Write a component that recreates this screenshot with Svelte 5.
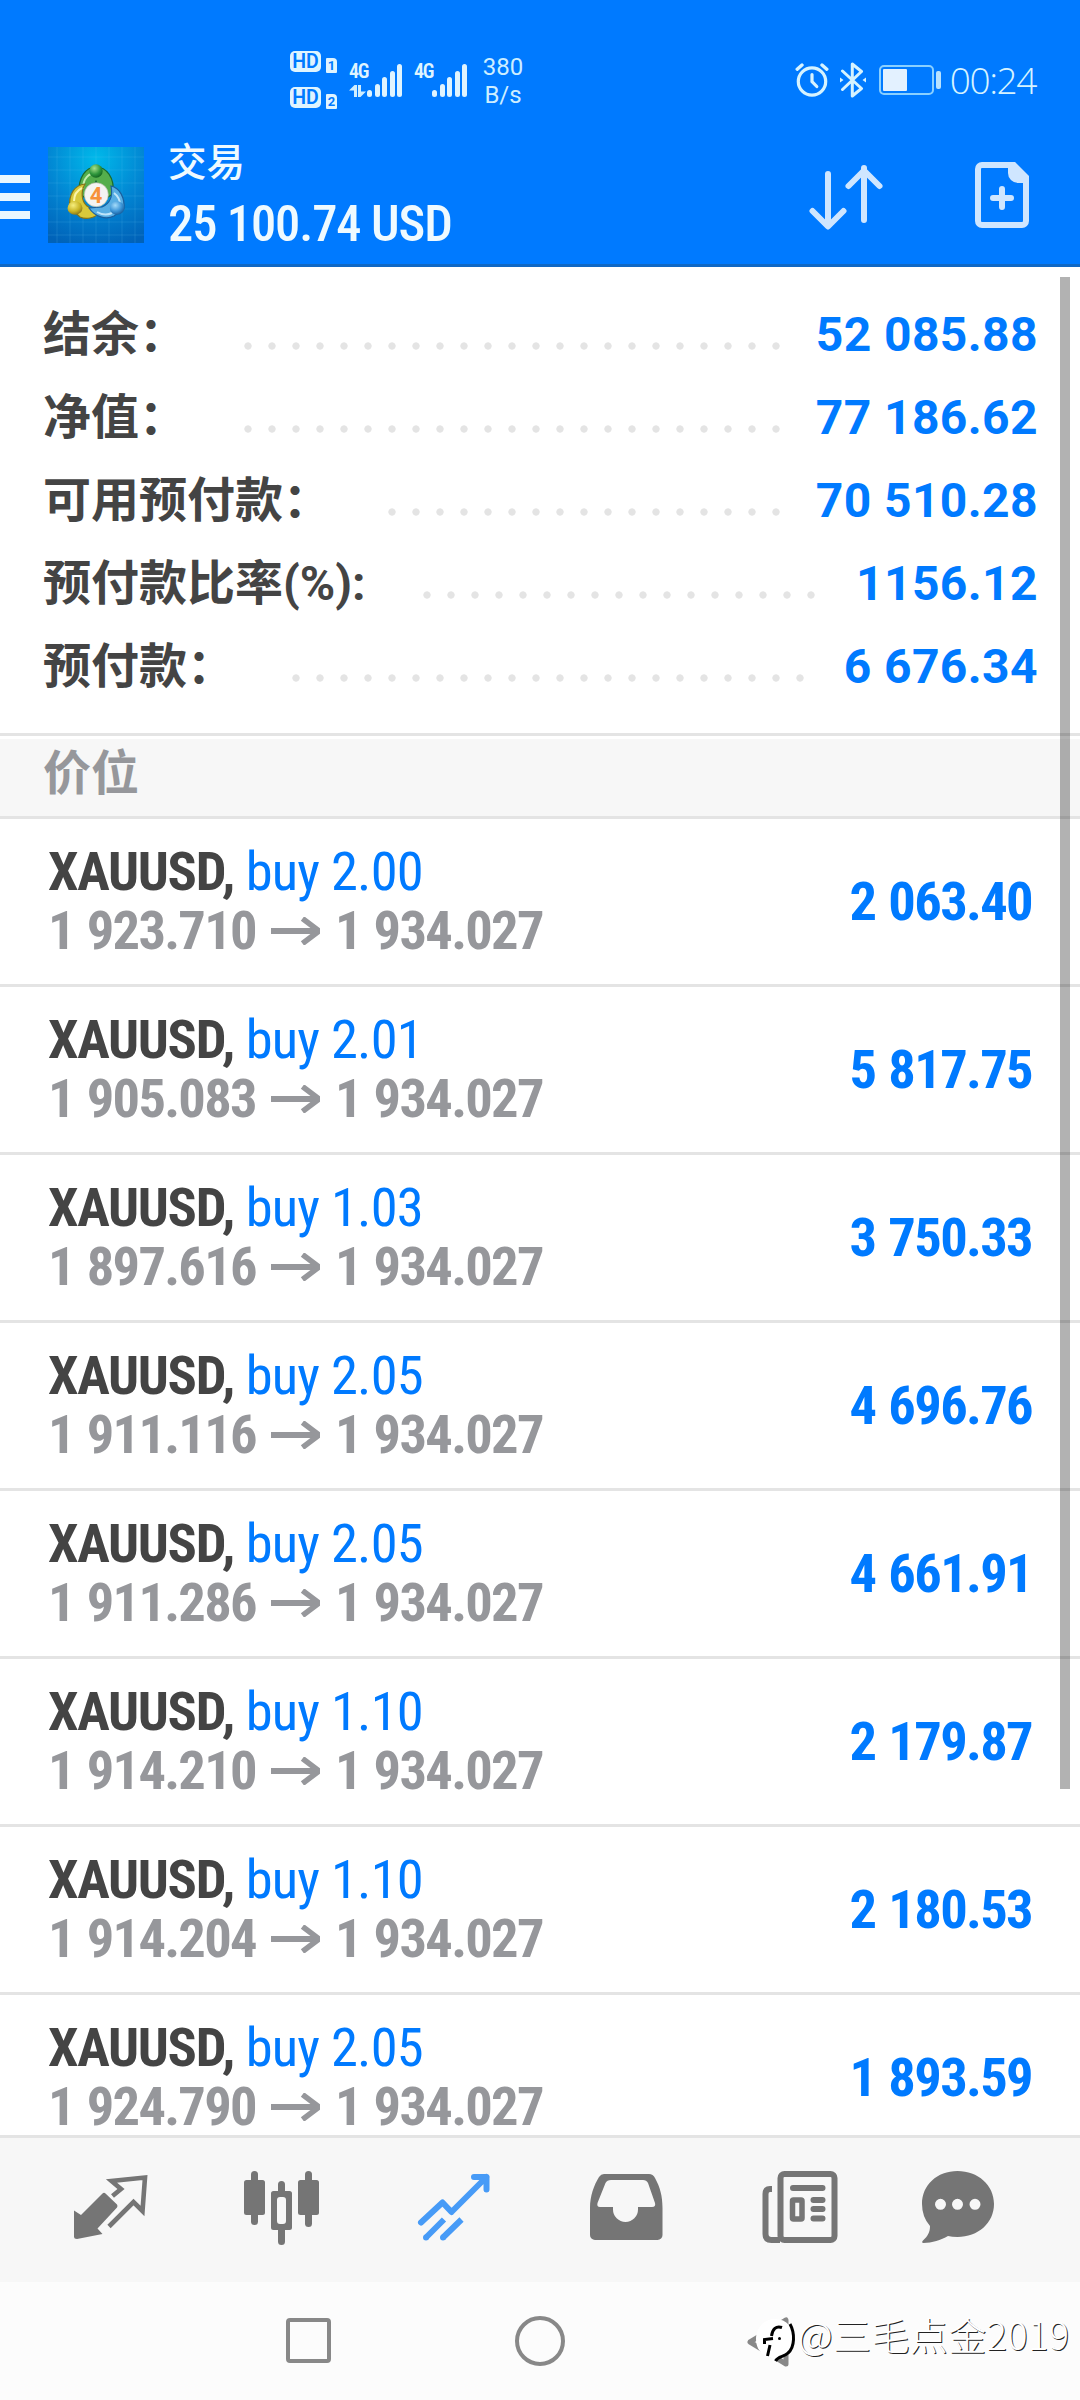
<script lang="ts">
  type SummaryRow = { label: string; dots: number; value: string };
  type Position = { symbol: string; volume: string; open: string; current: string; profit: string };

  const summary: SummaryRow[] = [
    { label: '结余：', dots: 23, value: '52 085.88' },
    { label: '净值：', dots: 23, value: '77 186.62' },
    { label: '可用预付款：', dots: 17, value: '70 510.28' },
    { label: '预付款比率(%):', dots: 17, value: '1156.12' },
    { label: '预付款：', dots: 22, value: '6 676.34' },
  ];

  const positions: Position[] = [
    { symbol: 'XAUUSD', volume: '2.00', open: '1 923.710', current: '1 934.027', profit: '2 063.40' },
    { symbol: 'XAUUSD', volume: '2.01', open: '1 905.083', current: '1 934.027', profit: '5 817.75' },
    { symbol: 'XAUUSD', volume: '1.03', open: '1 897.616', current: '1 934.027', profit: '3 750.33' },
    { symbol: 'XAUUSD', volume: '2.05', open: '1 911.116', current: '1 934.027', profit: '4 696.76' },
    { symbol: 'XAUUSD', volume: '2.05', open: '1 911.286', current: '1 934.027', profit: '4 661.91' },
    { symbol: 'XAUUSD', volume: '1.10', open: '1 914.210', current: '1 934.027', profit: '2 179.87' },
    { symbol: 'XAUUSD', volume: '1.10', open: '1 914.204', current: '1 934.027', profit: '2 180.53' },
    { symbol: 'XAUUSD', volume: '2.05', open: '1 924.790', current: '1 934.027', profit: '1 893.59' },
  ];

  const bars = [7, 13, 20, 26.5, 33];
</script>

{#snippet signal(data: boolean)}
  <div class="signal">
    <div class="net">
      <span class="net-type">4G</span>
      {#if data}
        <svg width="17" height="12" viewBox="0 0 17 12" fill="#cfeeff"><path d="M0 5.5L5.5 0H8v12H5V5.5zM9 0h3v6.5h5L11.5 12H9z"/></svg>
      {/if}
    </div>
    <div class="bars">
      {#each bars as h}
        <i style="height: {h}px"></i>
      {/each}
    </div>
  </div>
{/snippet}

<div class="screen">
  <header>
    <div class="status">
      <div class="hd">
        {#each [1, 2] as sim}
          <div class="hd-row">
            <span class="hd-badge">HD</span>
            <span class="sim">{sim}</span>
          </div>
        {/each}
      </div>
      {@render signal(true)}
      {@render signal(false)}
      <div class="speed"><span>380</span><span>B/s</span></div>
      <div class="spacer"></div>
      <svg class="alarm" width="34" height="36" viewBox="0 0 34 36" fill="none" stroke="#d6f3ff" stroke-linecap="round">
        <circle cx="17" cy="19.5" r="13.7" stroke-width="3.2"/>
        <path d="M17 12.5V19.5L21.8 24.5" stroke-width="3.2"/>
        <path d="M2.2 7.2L7 3M31.8 7.2L27 3" stroke-width="3.4"/>
      </svg>
      <svg class="bt" width="28" height="36" viewBox="0 0 28 36" fill="none" stroke="#d6f3ff" stroke-width="3" stroke-linejoin="round" stroke-linecap="round">
        <path d="M3.5 9L22.5 26.5 13.3 34V2L22.5 9.5 3.5 27.5"/>
        <path d="M1 15.5v5l3.5-2.5zM27 15.5v5l-3.5-2.5z" fill="#d6f3ff" stroke="none"/>
      </svg>
      <div class="battery"><div class="shell"><i></i></div><b></b></div>
      <span class="clock">00:24</span>
    </div>

    <div class="toolbar">
      <div class="menu"><i></i><i></i><i></i></div>
      <svg class="logo" width="96" height="96" viewBox="0 0 96 96">
        <defs>
          <radialGradient id="bg" cx="50%" cy="12%" r="95%">
            <stop offset="0" stop-color="#00b9ea"/><stop offset=".55" stop-color="#0284d2"/><stop offset="1" stop-color="#0062b8"/>
          </radialGradient>
          <radialGradient id="green" cx="38%" cy="30%" r="75%"><stop offset="0" stop-color="#a8e08a"/><stop offset=".6" stop-color="#2f963c"/><stop offset="1" stop-color="#11601f"/></radialGradient>
          <radialGradient id="yellow" cx="38%" cy="30%" r="75%"><stop offset="0" stop-color="#f6ee7e"/><stop offset=".6" stop-color="#c9b526"/><stop offset="1" stop-color="#83721a"/></radialGradient>
          <radialGradient id="blue" cx="38%" cy="30%" r="75%"><stop offset="0" stop-color="#a5dcfa"/><stop offset=".6" stop-color="#3a93d6"/><stop offset="1" stop-color="#155a99"/></radialGradient>
        </defs>
        <rect width="96" height="96" fill="url(#bg)"/>
        <path d="M9 0V96M22 0V96M35 0V96M48 0V96M61 0V96M74 0V96M87 0V96M0 10H96M0 23H96M0 36H96M0 49H96M0 62H96M0 75H96M0 88H96" stroke="#6cc6f5" stroke-opacity=".22" stroke-width=".8"/>
        <path d="M31 47C30 30 38 20 48 20S67 30 65 47L57 52 48 34 39 52z" fill="#55ae4c" stroke="#1b6a2c" stroke-width="1.2"/>
        <path d="M35 42C35 31 41 26 48 26" stroke="#c2ecae" stroke-width="2" fill="none"/>
        <path d="M37 37C27 38 20 47 22 61L32 70C38 73 47 71 51 66L39 59C33 54 33 44 37 37z" fill="#d8c93b" stroke="#85741a" stroke-width="1.2"/>
        <path d="M26 54C26 47 30 43 34 41" stroke="#fbf5a8" stroke-width="2" fill="none"/>
        <path d="M63 39C72 41 77 51 76 62L66 69C58 73 47 70 41 61L54 60C62 57 65 49 63 39z" fill="#58aee3" stroke="#1b5f9e" stroke-width="1.2"/>
        <path d="M49 65C54 68 60 68 64 66M66 46C70 49 72 54 72 58" stroke="#bfe5fa" stroke-width="2" fill="none"/>
        <circle cx="48" cy="24" r="6.7" fill="url(#green)"/>
        <ellipse cx="27" cy="61" rx="7.5" ry="6.7" fill="url(#yellow)"/>
        <ellipse cx="69" cy="61" rx="7.2" ry="6.7" fill="url(#blue)"/>
        <circle cx="48.3" cy="47.7" r="12" fill="#f4f4f2" stroke="#b9bfae" stroke-width=".7"/>
        <text x="48" y="55.5" text-anchor="middle" class="logo-num">4</text>
      </svg>
      <div class="titles">
        <span class="title">交易</span>
        <span class="balance">25 100.74 USD</span>
      </div>
      <svg class="sort" width="76" height="68" viewBox="0 0 76 68" fill="none" stroke="#cfe6ff" stroke-width="6" stroke-linecap="round" stroke-linejoin="round">
        <path d="M20 12V64M4.5 49L20 64.5 35.5 49"/>
        <path d="M56 58V6M40.5 24L56 8.5 71.5 24"/>
      </svg>
      <svg class="doc" width="54" height="66" viewBox="0 0 54 66" fill="none" stroke="#cfe6ff" stroke-width="6" stroke-linecap="round">
        <path d="M38 3H7a4 4 0 0 0-4 4V59a4 4 0 0 0 4 4H47a4 4 0 0 0 4-4V18"/>
        <path d="M33 0H40L54 14V21H43A10 10 0 0 1 33 11z" fill="#cfe6ff" stroke="none"/>
        <path d="M27 27V45M18 36H36"/>
      </svg>
    </div>
  </header>

  <main>
    <section class="summary">
      {#each summary as row}
        <div class="sum-row">
          <span class="sum-label">{row.label}</span>
          <span class="dots" style="width: {row.dots * 24}px"></span>
          <span class="sum-value">{row.value}</span>
        </div>
      {/each}
    </section>

    <h2>价位</h2>

    <ul>
      {#each positions as p}
        <li>
          <div>
            <div class="deal"><b>{p.symbol},</b> <span>buy {p.volume}</span></div>
            <div class="prices">
              <span>{p.open}</span>
              <svg width="49" height="28" viewBox="0 0 49 28" fill="none" stroke="#96979b"><path d="M0 14H48" stroke-width="6"/><path d="M31.5 1.5L48 14 31.5 26.5" stroke-width="5.5"/></svg>
              <span>{p.current}</span>
            </div>
          </div>
          <span class="profit">{p.profit}</span>
        </li>
      {/each}
    </ul>
    <div class="scrollbar"></div>
  </main>

  <nav class="tabs">
    <svg viewBox="8 0 90 90" fill="#757575">
      <path d="M17 34.5L24 39 45.5 17.5Q47 16 48.5 17.5L60 28.5Q61 30 60 31.5L40.5 52.5 45.5 58 20 63Q17 63 17 60.5z"/>
      <path d="M55.5 20L64 13 54.5 5 88 1.5 85.5 35 76.5 26 52 50.5" fill="none" stroke="#757575" stroke-width="4.6"/>
    </svg>
    <svg viewBox="0 0 90 90" fill="#757575">
      <rect x="7" y="4" width="21" height="35" rx="2.5"/><rect x="14" y="-5" width="7" height="54" rx="3.5"/>
      <path d="M36.5 15H52.5A2.5 2.5 0 0 1 55 17.5V51.5A2.5 2.5 0 0 1 52.5 54H36.5A2.5 2.5 0 0 1 34 51.5V17.5A2.5 2.5 0 0 1 36.5 15zM43 21a3 3 0 0 0-3 3V45a3 3 0 0 0 3 3h3a3 3 0 0 0 3-3V24a3 3 0 0 0-3-3z" fill-rule="evenodd"/>
      <path d="M41 16V8.5a3.5 3.5 0 0 1 7 0V16zM41 53V65.5a3.5 3.5 0 0 0 7 0V53z"/>
      <rect x="61" y="4" width="21" height="35" rx="2.5"/><rect x="68" y="-5" width="7" height="56" rx="3.5"/>
    </svg>
    <svg viewBox="-1 0 90 90" fill="none" stroke="#479bf7" stroke-width="6" stroke-linejoin="round">
      <path d="M11 46.5L32.5 26.5 41.5 36 76.5 1M64 1H76.5V13.5" stroke-linecap="round"/>
      <path d="M16 61.5L34 43.5M33 61.5L51.5 43.5"/>
      <path d="M16 61.5h0M33 61.5h0" stroke-linecap="round"/>
    </svg>
    <svg viewBox="-6 0 90 90" fill="#757575">
      <path fill-rule="evenodd" d="M22-2H62Q66-2 68 2C73 11 75.5 20 75.5 32V59A5 5 0 0 1 70.5 64H8A5 5 0 0 1 3 59V32C3 20 7 9 12 1Q14-2 17-2zM24 4Q20 4 18.5 7L10.5 27Q9.5 31 13 31H26V33.5A12.5 12.5 0 0 0 51 33.5V31H65Q69 31 68 27L61 7Q59.5 4 56 4z"/>
    </svg>
    <svg viewBox="-4 0 90 90" fill="none" stroke="#757575" stroke-width="6">
      <rect x="23.5" y="-2" width="54" height="66" rx="4"/>
      <path d="M15 13H13Q8.500 13 8.500 18V58Q8.500 64 14.500 64H23"/>
      <path d="M36 12H65.5M56.5 24H65.5M56.5 33H65.5M56.5 42.5H65.5" stroke-linecap="round"/>
      <rect x="35.5" y="24" width="9.5" height="19" rx="1" stroke-width="5.5"/>
    </svg>
    <svg viewBox="10 0 90 90" fill="#757575">
      <path fill-rule="evenodd" d="M42.5-5C63-5 79 9 79 28S63 61 42.5 61Q37 61 33 60C26 64 17 67 8.5 67Q6 66.5 8 64.5C13 60 15 56 15 50Q7 41 7 28C7 9 22-5 42.5-5zM25.5 22.8a5.5 5.5 0 1 0 0 11 5.5 5.5 0 0 0 0-11zM42.5 22.8a5.5 5.5 0 1 0 0 11 5.5 5.5 0 0 0 0-11zM60 22.8a5.5 5.5 0 1 0 0 11 5.5 5.5 0 0 0 0-11z"/>
    </svg>
  </nav>

  <footer>
    <div class="square"></div>
    <div class="circle"></div>
    <svg class="back" width="46" height="52" viewBox="0 0 46 52" fill="none" stroke="#888" stroke-width="5" stroke-linejoin="round"><path d="M4 26L40 4V48z"/></svg>
    <div class="watermark">
      <svg width="44" height="52" viewBox="0 0 44 52" fill="none">
        <path d="M21 5C33 5 40 14 40 26S34 42 22 45L20 50 17 44C8 42 2 35 2 25S9 5 21 5z" fill="#fff"/>
        <path d="M36 10C41 19 41 33 34 39C30 43 24 42 21.5 47" stroke="#000" stroke-width="3"/>
        <path d="M28 13.5C22 11.5 18.5 15 17.5 22M10.5 30V25.5L19 24.5M16 31L13.500 42" stroke="#000" stroke-width="3"/>
        <circle cx="25.5" cy="24.5" r="1.5" fill="#000"/>
      </svg>
      <span>@三毛点金2019</span>
    </div>
  </footer>
</div>

<style>
  :global(body) { background: #fff; }

  .screen {
    width: 1080px;
    height: 2400px;
    display: flex;
    flex-direction: column;
    overflow: hidden;
    font-family: "Roboto Condensed", Roboto, "Noto Sans CJK SC", sans-serif;
    background: #fff;
  }
  svg { display: block; flex: none; }
  .spacer { flex: 1; }

  header {
    height: 264px;
    flex: none;
    background: #007aff;
    border-bottom: 3px solid #1068c4;
    color: #effaff;
  }

  .status {
    height: 130px;
    box-sizing: border-box;
    padding: 30px 44px 0 290px;
    display: flex;
    align-items: center;
  }
  .hd { display: flex; flex-direction: column; gap: 13px; margin: -1px 12px 0 0; }
  .hd-row { display: flex; align-items: flex-end; gap: 5px; height: 23px; }
  .hd-badge {
    width: 31px;
    height: 21px;
    margin-bottom: 1px;
    border-radius: 5px;
    background: #dff4ff;
    color: #007aff;
    font: 600 19.5px/21px Roboto, sans-serif;
    text-align: center;
  }
  .sim {
    width: 11px;
    height: 15px;
    border-radius: 1px 4px 1px 1px;
    background: #dff4ff;
    color: #007aff;
    font: 700 13px/15px Roboto, sans-serif;
    text-align: center;
  }
  .signal { display: flex; height: 34px; width: 65px; }
  .net { display: flex; flex-direction: column; gap: 5px; width: 18px; }
  .net-type {
    font-size: 20px;
    line-height: 17px;
    font-weight: 600;
    letter-spacing: -1.2px;
    color: #dff4ff;
  }
  .bars { display: flex; align-items: flex-end; gap: 2.5px; height: 34px; }
  .bars i { width: 5px; border-radius: 3px; background: #dff4ff; }
  .speed {
    display: flex;
    flex-direction: column;
    align-items: center;
    width: 40px;
    margin: 2px 0 0 4px;
    font: 24px/28px Roboto, sans-serif;
    color: #cdeeff;
  }
  .alarm { margin-right: 10px; }
  .bt { margin-right: 12px; }
  .battery { display: flex; align-items: center; gap: 2px; margin-right: 9px; }
  .shell {
    width: 55px;
    height: 30px;
    box-sizing: border-box;
    border: 2px solid #8ad0ff;
    border-radius: 5px;
    padding: 2px;
  }
  .shell i { display: block; width: 24px; height: 22px; background: #e3f1ff; border-radius: 1px; }
  .battery b { width: 5px; height: 18px; border-radius: 2px; background: #b8e2ff; }
  .clock {
    font: 300 37px/44px "Open Sans", "Noto Sans", sans-serif;
    letter-spacing: -1.4px;
    color: #d6f3ff;
  }

  .toolbar { display: flex; align-items: flex-start; padding-top: 13px; }
  .menu { display: flex; flex-direction: column; gap: 10px; margin: 32px 18px 0 0; }
  .menu i { width: 30px; height: 8px; background: #eaf7ff; }
  .logo { margin-top: 4px; }
  .logo-num { font: 700 22px Roboto, sans-serif; fill: #f7923a; }
  .titles { display: flex; flex-direction: column; margin-left: 24px; width: 640px; }
  .title { font-size: 38.5px; line-height: 40px; font-weight: 500; }
  .balance { font-size: 50.5px; line-height: 58px; font-weight: 500; letter-spacing: -1.1px; margin-top: 12px; }
  .sort { margin-top: 19px; }
  .doc { margin: 19px 0 0 91px; }

  main { position: relative; height: 1868px; overflow: hidden; flex: none; }

  .summary { padding: 26px 42px 25px 43px; border-bottom: 3px solid #e4e4e4; }
  .sum-row { display: flex; align-items: center; height: 83px; }
  .sum-label {
    font: 700 48px/83px Roboto, "Noto Sans CJK SC", sans-serif;
    color: #444;
    white-space: nowrap;
  }
  .dots {
    height: 8px;
    margin: 23px 0 0 57px;
    background: radial-gradient(circle at 4px 4px, #e4e4e4 3.3px, transparent 4px) 0 0 / 24px 8px repeat-x;
  }
  .sum-value {
    margin-left: auto;
    font: 700 48px/83px Roboto, sans-serif;
    letter-spacing: 0.4px;
    color: #007aff;
    white-space: nowrap;
  }

  h2 {
    margin: 3px 0 0;
    height: 77px;
    padding-left: 43px;
    border-bottom: 3px solid #e4e4e4;
    background: #f7f7f7;
    color: #96979b;
    font-size: 48px;
    line-height: 69px;
    font-weight: 700;
  }

  ul { list-style: none; margin: 0; padding: 0; }
  li {
    display: flex;
    justify-content: space-between;
    height: 165px;
    padding: 0 48px;
    border-bottom: 3px solid #e4e4e4;
    font-size: 54.5px;
    line-height: 59px;
    white-space: nowrap;
  }
  .deal { margin-top: 23px; color: #007aff; letter-spacing: -0.8px; }
  .deal b { color: #444; letter-spacing: -1.3px; }
  .prices {
    display: flex;
    align-items: center;
    gap: 15px;
    margin-top: 2px;
    color: #96979b;
    font-weight: 700;
    line-height: 55px;
    letter-spacing: -1.7px;
    word-spacing: 2px;
  }
  .profit {
    color: #007aff;
    font-weight: 700;
    line-height: 165px;
    letter-spacing: -1.65px;
    word-spacing: 2px;
  }

  .scrollbar {
    position: absolute;
    top: 10px;
    right: 10px;
    width: 10px;
    height: 1512px;
    background: rgba(0, 0, 0, 0.3);
  }

  .tabs {
    height: 147px;
    flex: none;
    display: grid;
    grid-template-columns: repeat(6, 1fr);
    justify-items: center;
    padding: 38px 24px 0;
    box-sizing: border-box;
    border-top: 3px solid #e4e4e4;
    background: #f7f7f7;
  }
  .tabs svg { width: 90px; height: 90px; overflow: visible; }

  footer { position: relative; flex: 1; display: flex; align-items: flex-start; padding: 34px 0 0 286px; background: #fcfcfc; }
  .square { width: 37px; height: 37px; margin-top: 2px; border: 4.5px solid #888; border-radius: 4px; }
  .circle { width: 42px; height: 42px; margin-left: 184px; border: 4px solid #888; border-radius: 50%; }
  .back { margin-left: 181px; }
  .watermark {
    position: absolute;
    left: 754px;
    top: 32px;
    display: flex;
    align-items: center;
    color: #fff;
  }
  .watermark span {
    margin-top: -12px;
    font: 300 38px/52px "Noto Sans CJK SC", sans-serif;
    letter-spacing: 0.4px;
    text-shadow: 1px 1px 0 #222;
    white-space: nowrap;
  }
</style>
